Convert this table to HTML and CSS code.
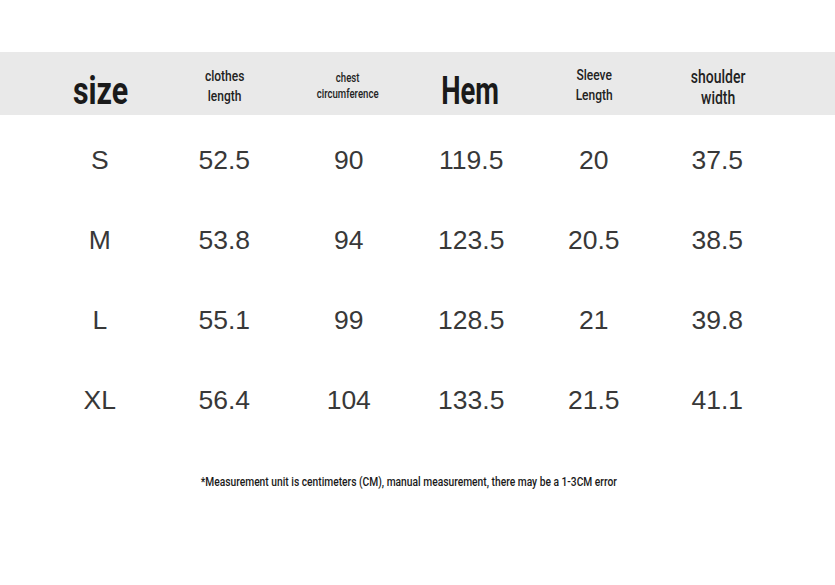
FILE: index.html
```html
<!DOCTYPE html>
<html lang="en">
<head>
<meta charset="utf-8">
<title>Size chart</title>
<link rel="stylesheet" href="styles.css">
</head>
<body>
<main class="chart">
  <div class="head">
    <div class="hcell big size"><span>size</span></div>
    <div class="hcell h-clothes"><span>clothes<br>length</span></div>
    <div class="hcell h-chest"><span>chest<br>circumference</span></div>
    <div class="hcell big hem"><span>Hem</span></div>
    <div class="hcell h-sleeve"><span>Sleeve<br>Length</span></div>
    <div class="hcell h-shoulder"><span>shoulder<br>width</span></div>
  </div>
  <div class="rows">
    <div class="row"><span>S</span><span>52.5</span><span>90</span><span>119.5</span><span>20</span><span>37.5</span></div>
    <div class="row"><span>M</span><span>53.8</span><span>94</span><span>123.5</span><span>20.5</span><span>38.5</span></div>
    <div class="row"><span>L</span><span>55.1</span><span>99</span><span>128.5</span><span>21</span><span>39.8</span></div>
    <div class="row"><span>XL</span><span>56.4</span><span>104</span><span>133.5</span><span>21.5</span><span>41.1</span></div>
  </div>
  <p class="note"><span>*Measurement unit is centimeters (CM), manual measurement, there may be a 1-3CM error</span></p>
</main>
</body>
</html>
```
FILE: styles.css
```css
html, body {
  margin: 0;
  padding: 0;
  background: #ffffff;
}
.chart {
  padding-top: 52px;
  font-family: "Liberation Sans", Arial, sans-serif;
}
.head {
  height: 63px;
  background: #e9e9e9;
  display: grid;
  grid-template-columns: repeat(6, 123.5px);
  padding-left: 38px;
  align-items: center;
  font-family: Roboto, "DejaVu Sans Condensed", sans-serif;
  color: #222;
}
.hcell {
  text-align: center;
}
.hcell span {
  display: inline-block;
  transform: scaleX(0.8);
}
.big {
  font-size: 38px;
  font-weight: bold;
  line-height: 40px;
  color: #1a1a1a;
  padding-top: 14px;
}
.size {
  padding-left: 2px;
}
.hem span {
  transform: scaleX(0.72);
}
.h-clothes {
  font-size: 15px;
  font-weight: 500;
  line-height: 20px;
  padding-top: 4px;
  padding-left: 2px;
}
.h-chest {
  font-size: 12px;
  font-weight: 500;
  line-height: 16px;
  padding-top: 4px;
  padding-left: 2px;
}
.h-sleeve {
  font-size: 15px;
  font-weight: 500;
  line-height: 20px;
  padding-top: 2px;
}
.h-shoulder {
  font-size: 17.5px;
  font-weight: 500;
  line-height: 21px;
  padding-top: 8px;
  padding-left: 2px;
}
.rows {
  padding-top: 5px;
}
.row {
  height: 80px;
  display: grid;
  grid-template-columns: 123.5px 125.5px 123.5px 121.5px 123.5px 123.5px;
  padding-left: 38px;
  align-items: center;
  font-size: 26.5px;
  color: #383838;
}
.row span {
  text-align: center;
}
.note {
  margin: 34px 0 0;
  text-align: center;
  font-family: Roboto, "DejaVu Sans Condensed", sans-serif;
  font-weight: 500;
  font-size: 12.5px;
  line-height: 16px;
  color: #1a1a1a;
  width: 818px;
}
.note span {
  display: inline-block;
  transform: scaleX(0.82);
}
```
